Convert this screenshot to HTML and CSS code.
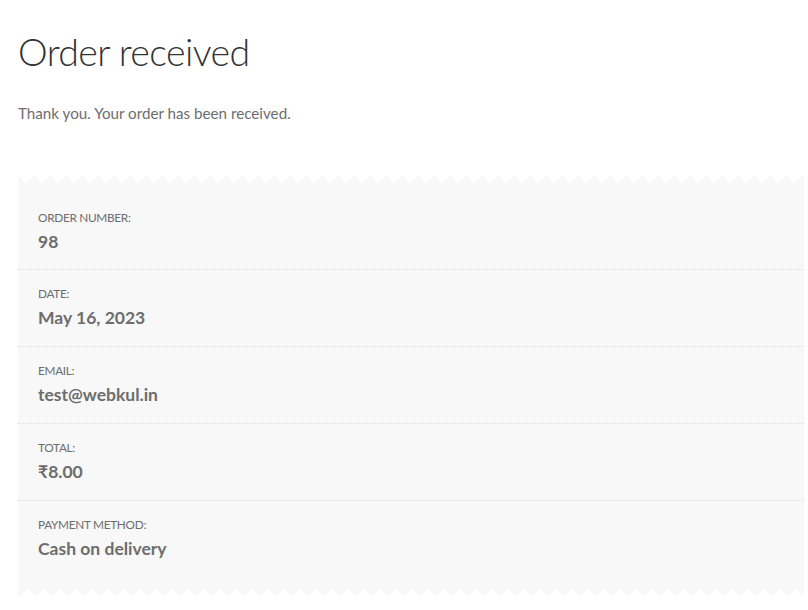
FILE: index.html
```html
<!DOCTYPE html>
<html lang="en">
<head>
<meta charset="utf-8">
<title>Order received</title>
<link rel="stylesheet" href="styles.css">
</head>
<body>
<main class="page">
  <h1 class="title">Order received</h1>
  <p class="notice">Thank you. Your order has been received.</p>
  <ul class="details">
    <li class="row"><span class="label">Order number:</span><strong class="value">98</strong></li>
    <li class="row"><span class="label">Date:</span><strong class="value">May 16, 2023</strong></li>
    <li class="row"><span class="label">Email:</span><strong class="value">test@webkul.in</strong></li>
    <li class="row"><span class="label">Total:</span><strong class="value">₹8.00</strong></li>
    <li class="row"><span class="label">Payment method:</span><strong class="value">Cash on delivery</strong></li>
  </ul>
</main>
</body>
</html>
```
FILE: styles.css
```css
html, body {
  margin: 0;
  padding: 0;
  background: #ffffff;
}

body {
  font-family: Lato, "Open Sans", "Liberation Sans", sans-serif;
  color: #6d6d6d;
}

.page {
  padding: 0 4px 0 18px;
}

.title {
  margin: 28px 0 0;
  font-size: 37.5px;
  line-height: 48px;
  font-weight: 300;
  letter-spacing: -0.6px;
  color: #333333;
}

.notice {
  margin: 24px 0 0;
  font-size: 15.2px;
  line-height: 26px;
}

.details {
  list-style: none;
  margin: 49px 0 0;
  padding: 8px 0;
  background-image:
    conic-gradient(from 135deg at 50% 0, #f8f8f8 0 90deg, transparent 90deg),
    conic-gradient(from -45deg at 50% 100%, #f8f8f8 0 90deg, transparent 90deg),
    linear-gradient(#f8f8f8, #f8f8f8);
  background-size: 16px 8px, 16px 8px, 100% calc(100% - 16px);
  background-position: -8px 0, -6px 100%, 0 8px;
  background-repeat: repeat-x, repeat-x, no-repeat;
}

.row {
  padding: 15px 20px 13px;
  border-bottom: 1px dotted #dcdcdc;
}

.row:first-child {
  padding-top: 26px;
  padding-bottom: 12px;
}

.row:last-child {
  border-bottom: 0;
  padding-bottom: 24px;
}

.label {
  display: block;
  font-size: 11.8px;
  line-height: 18px;
  letter-spacing: -0.3px;
  text-transform: uppercase;
}

.value {
  display: block;
  font-size: 17.5px;
  line-height: 30px;
  font-weight: 700;
}
```
